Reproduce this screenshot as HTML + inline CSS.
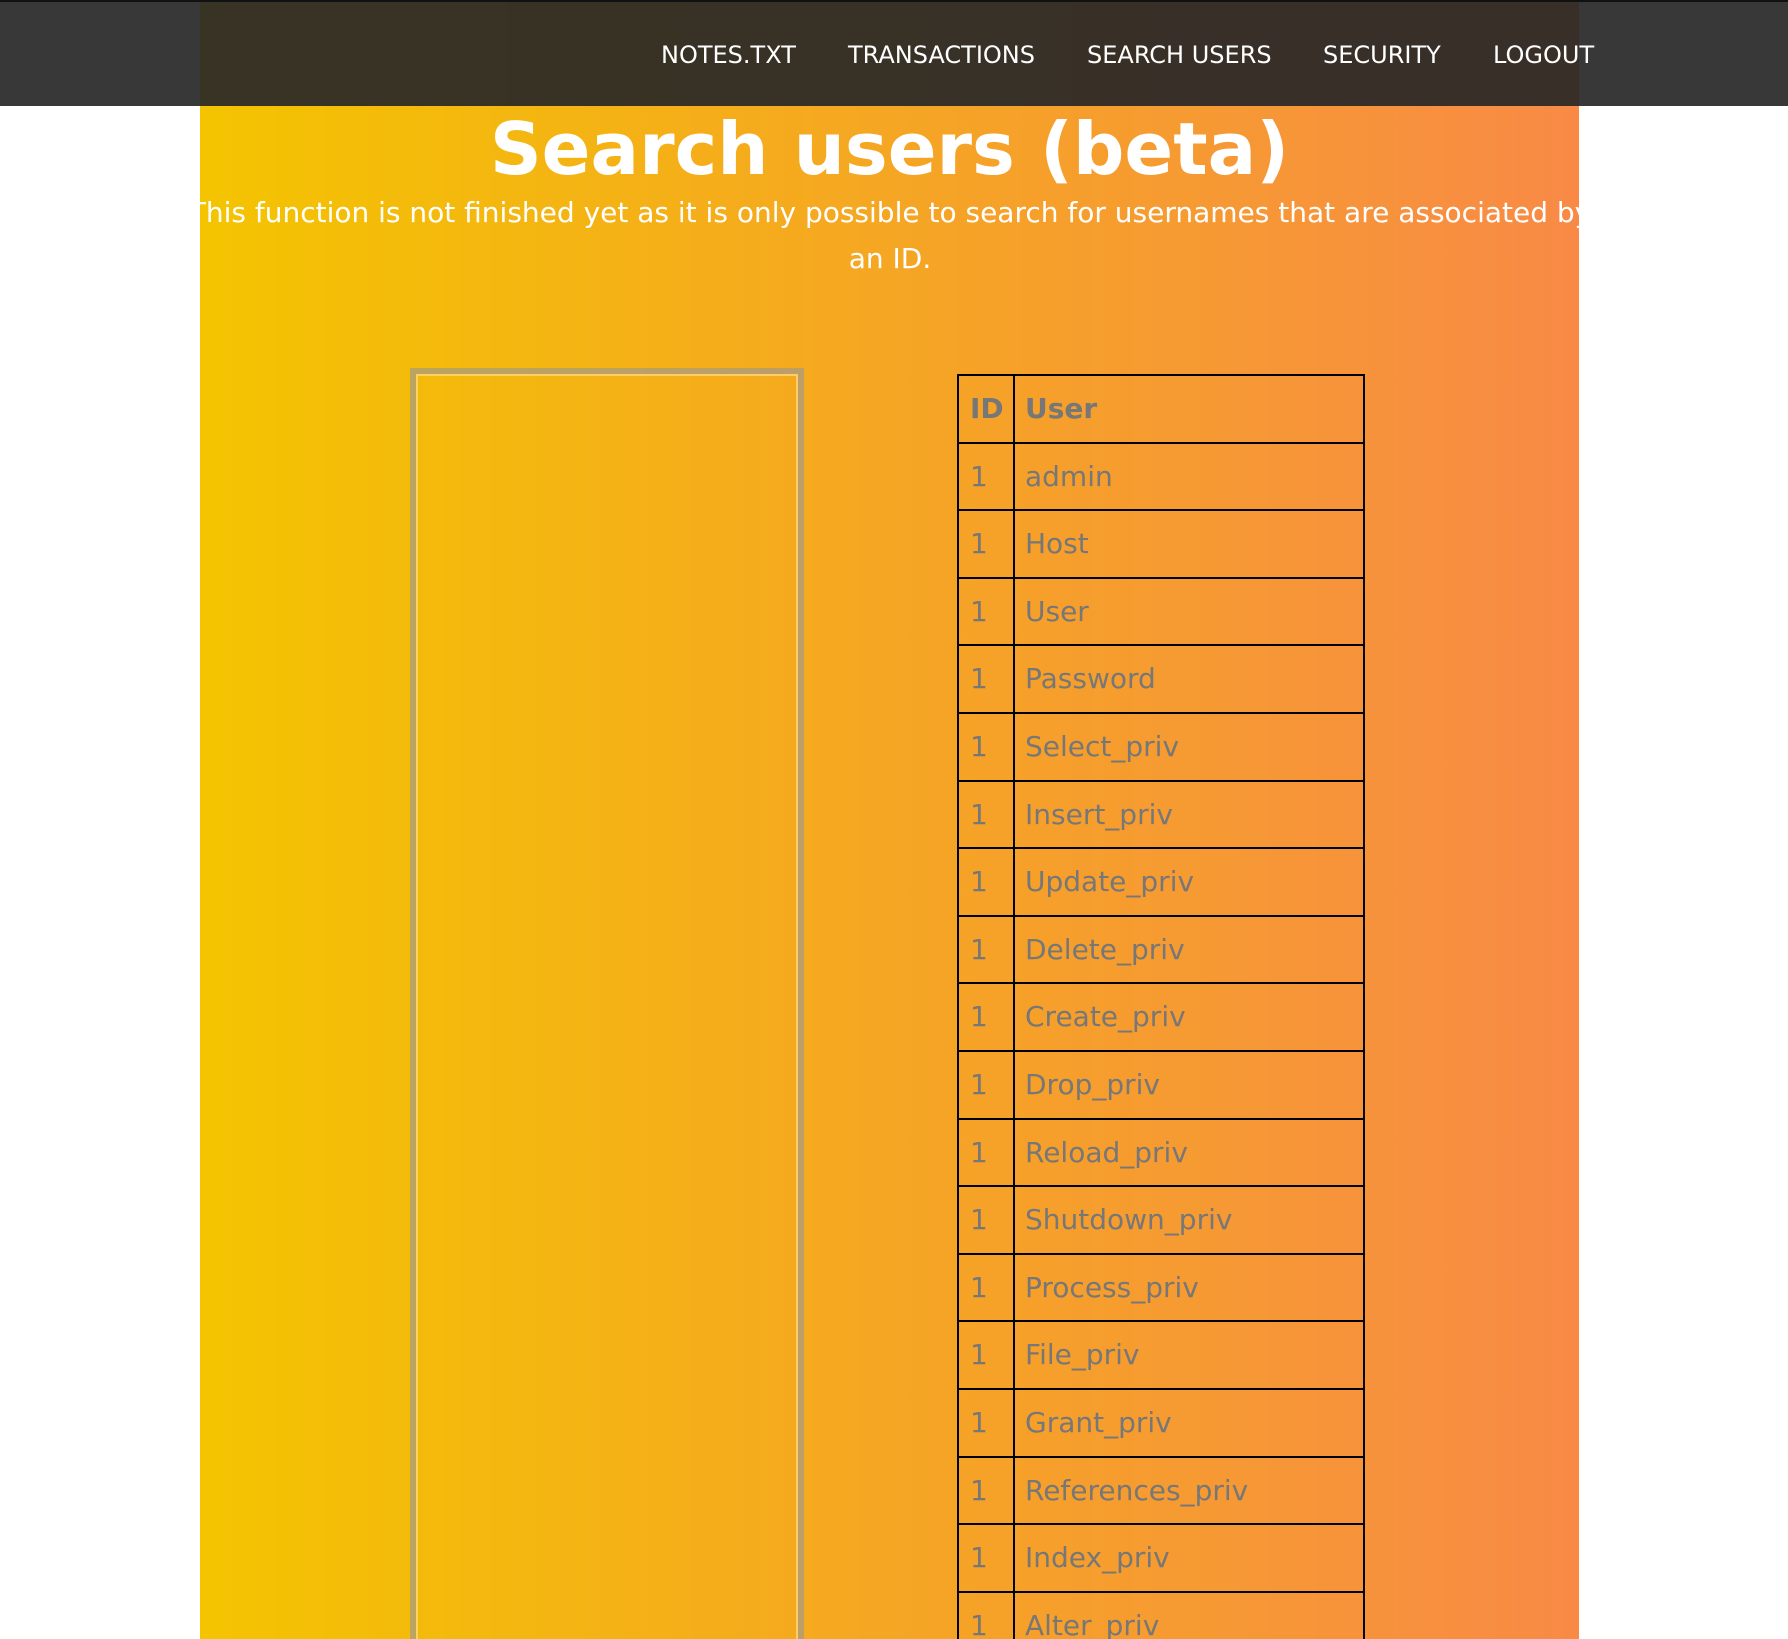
<!DOCTYPE html>
<html><head><meta charset="utf-8"><style>
html,body{margin:0;padding:0;width:1788px;height:1639px;overflow:hidden;background:#fff;font-family:"DejaVu Sans","Liberation Sans",sans-serif;}
#root{position:relative;width:1788px;height:1639px;overflow:hidden;}
#wrap{position:absolute;left:200px;top:0;width:1379px;height:1639px;background:linear-gradient(90deg,#f4c400 0%,#f5a623 50%,#f88a46 100%);}
#nav{position:absolute;left:0;top:0;width:1788px;height:106px;background:rgba(39,39,39,0.92);border-top:2px solid #111;box-sizing:border-box;z-index:5;}
.n{position:absolute;top:41px;font-size:24px;line-height:24px;color:#fff;white-space:nowrap;}
h1{position:absolute;left:200px;width:1379px;top:113px;margin:0;text-align:center;font-size:72px;line-height:72px;font-weight:bold;color:#fff;}
p{position:absolute;left:90px;width:1600px;top:190px;margin:0;text-align:center;font-size:28px;line-height:46px;color:#fff;}
#box{position:absolute;left:410px;top:368px;width:394px;height:1400px;box-sizing:border-box;border:6px solid rgba(150,150,150,0.6);}
#box div{position:absolute;left:0;top:0;right:0;bottom:0;border:2px solid rgba(255,220,140,0.7);}
.r{position:absolute;left:957px;width:408px;height:67.6px;box-sizing:border-box;border:2px solid #000;border-bottom:none;font-size:28px;color:#777;}
.r span{position:absolute;top:-1px;line-height:67px;}
.r .a{left:11px}
.r .b{left:66px}
.r:before{content:"";position:absolute;left:54px;top:0;bottom:0;width:2px;background:#000}
.r.h{font-weight:bold}
</style></head><body><div id="root">
<div id="wrap"></div>
<div id="nav">
<span class="n" style="left:661px">NOTES.TXT</span>
<span class="n" style="left:848px">TRANSACTIONS</span>
<span class="n" style="left:1087px">SEARCH USERS</span>
<span class="n" style="left:1323px">SECURITY</span>
<span class="n" style="left:1493px">LOGOUT</span>
</div>
<h1>Search users (beta)</h1>
<p>This function is not finished yet as it is only possible to search for usernames that are associated by<br>an ID.</p>
<div id="box"><div></div></div>
<div class="r h" style="top:374px"><span class="a">ID</span><span class="b">User</span></div>
<div class="r" style="top:441.6px"><span class="a">1</span><span class="b">admin</span></div>
<div class="r" style="top:509.2px"><span class="a">1</span><span class="b">Host</span></div>
<div class="r" style="top:576.8px"><span class="a">1</span><span class="b">User</span></div>
<div class="r" style="top:644.4px"><span class="a">1</span><span class="b">Password</span></div>
<div class="r" style="top:712px"><span class="a">1</span><span class="b">Select_priv</span></div>
<div class="r" style="top:779.6px"><span class="a">1</span><span class="b">Insert_priv</span></div>
<div class="r" style="top:847.2px"><span class="a">1</span><span class="b">Update_priv</span></div>
<div class="r" style="top:914.8px"><span class="a">1</span><span class="b">Delete_priv</span></div>
<div class="r" style="top:982.4px"><span class="a">1</span><span class="b">Create_priv</span></div>
<div class="r" style="top:1050px"><span class="a">1</span><span class="b">Drop_priv</span></div>
<div class="r" style="top:1117.6px"><span class="a">1</span><span class="b">Reload_priv</span></div>
<div class="r" style="top:1185.2px"><span class="a">1</span><span class="b">Shutdown_priv</span></div>
<div class="r" style="top:1252.8px"><span class="a">1</span><span class="b">Process_priv</span></div>
<div class="r" style="top:1320.4px"><span class="a">1</span><span class="b">File_priv</span></div>
<div class="r" style="top:1388px"><span class="a">1</span><span class="b">Grant_priv</span></div>
<div class="r" style="top:1455.6px"><span class="a">1</span><span class="b">References_priv</span></div>
<div class="r" style="top:1523.2px"><span class="a">1</span><span class="b">Index_priv</span></div>
<div class="r" style="top:1590.8px;height:80px"><span class="a">1</span><span class="b">Alter_priv</span></div>
</div></body></html>
